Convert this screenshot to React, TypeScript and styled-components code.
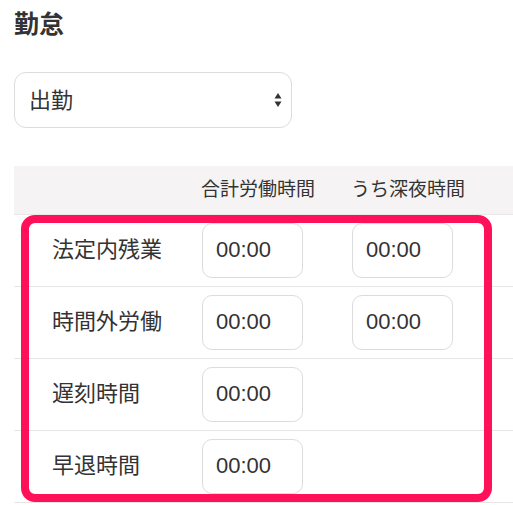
import React from "react";
import styled, { createGlobalStyle } from "styled-components";

const GlobalStyle = createGlobalStyle`
  html, body {
    margin: 0;
    padding: 0;
    background: #ffffff;
    overflow: hidden;
  }
  body {
    font-family: "Liberation Sans", "Noto Sans CJK JP", sans-serif;
    color: #333333;
  }
`;

const Page = styled.div`
  padding: 12px 0 0 14px;
`;

const Title = styled.h2`
  margin: 0;
  font-size: 25px;
  line-height: 24px;
  font-weight: 700;
  color: #333333;
`;

const SelectWrap = styled.div`
  position: relative;
  margin-top: 36px;
  width: 278px;
  height: 56px;
`;

const Select = styled.select`
  appearance: none;
  -webkit-appearance: none;
  box-sizing: border-box;
  width: 100%;
  height: 100%;
  border: 1px solid #dcdcdc;
  border-radius: 12px;
  background: #ffffff;
  padding: 0 0 0 14px;
  font-family: "Liberation Sans", "Noto Sans CJK JP", sans-serif;
  font-size: 22px;
  color: #333333;
  outline: none;
`;

const SelectArrows = styled.svg`
  position: absolute;
  right: 10px;
  top: 21px;
  width: 8px;
  height: 14px;
  pointer-events: none;
`;

const TableWrap = styled.div`
  position: relative;
  margin-top: 38px;
  width: 499px;
`;

const Table = styled.table`
  width: 100%;
  border-collapse: collapse;
  table-layout: fixed;
`;

const Col = styled.col<{ $w?: number }>`
  width: ${(p) => (p.$w ? `${p.$w}px` : "auto")};
`;

const HeadRow = styled.tr`
  background: #f5f3f4;
  height: 48px;
  border-bottom: 1px solid #e8e8e8;
`;

const HeadCell = styled.th`
  padding: 0 0 0 9px;
  text-align: left;
  font-family: "Liberation Sans", "Noto Sans CJK JP", sans-serif;
  font-weight: 400;
  font-size: 19px;
  line-height: 24px;
  color: #333333;
  vertical-align: middle;
  white-space: nowrap;
  overflow: hidden;
`;

const Row = styled.tr`
  border-bottom: 1px solid #e6e6e6;
`;

const LabelCell = styled.td`
  padding: 0 0 0 38px;
  font-size: 22px;
  line-height: 26px;
  color: #333333;
  vertical-align: middle;
  height: 71px;
  white-space: nowrap;
`;

const InputCell = styled.td`
  padding: 8px 0 8px 10px;
  vertical-align: middle;
`;

const TimeInput = styled.input`
  box-sizing: border-box;
  display: block;
  width: 101px;
  height: 55px;
  border: 1px solid #dcdcdc;
  border-radius: 10px;
  padding: 0 0 0 13px;
  font-family: "Liberation Sans", "Noto Sans CJK JP", sans-serif;
  font-size: 22px;
  color: #333333;
  background: #ffffff;
  outline: none;
`;

const Highlight = styled.div`
  position: absolute;
  left: 7px;
  top: 49px;
  width: 471px;
  height: 287px;
  box-sizing: border-box;
  border: 8px solid #ff1159;
  border-radius: 14px;
  pointer-events: none;
`;

type RowData = { label: string; night: boolean };

const rows: RowData[] = [
  { label: "法定内残業", night: true },
  { label: "時間外労働", night: true },
  { label: "遅刻時間", night: false },
  { label: "早退時間", night: false },
];

export default function App() {
  return (
    <>
      <GlobalStyle />
      <Page>
        <Title>勤怠</Title>
        <SelectWrap>
          <Select defaultValue="出勤">
            <option value="出勤">出勤</option>
            <option value="欠勤">欠勤</option>
          </Select>
          <SelectArrows viewBox="0 0 8 14">
            <path d="M4 0 L7.5 5.5 L0.5 5.5 Z" fill="#333" />
            <path d="M4 14 L7.5 8.5 L0.5 8.5 Z" fill="#333" />
          </SelectArrows>
        </SelectWrap>
        <TableWrap>
          <Table>
            <colgroup>
              <Col $w={178} />
              <Col $w={150} />
              <Col />
            </colgroup>
            <thead>
              <HeadRow>
                <HeadCell />
                <HeadCell>合計労働時間</HeadCell>
                <HeadCell>うち深夜時間</HeadCell>
              </HeadRow>
            </thead>
            <tbody>
              {rows.map((r) => (
                <Row key={r.label}>
                  <LabelCell>{r.label}</LabelCell>
                  <InputCell>
                    <TimeInput defaultValue="00:00" />
                  </InputCell>
                  <InputCell>
                    {r.night && <TimeInput defaultValue="00:00" />}
                  </InputCell>
                </Row>
              ))}
            </tbody>
          </Table>
          <Highlight />
        </TableWrap>
      </Page>
    </>
  );
}
